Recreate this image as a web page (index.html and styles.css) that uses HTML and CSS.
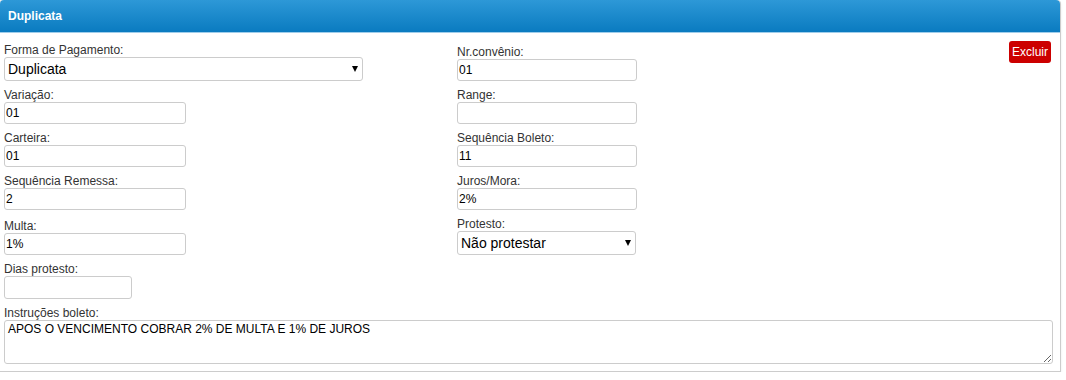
FILE: index.html
```html
<!DOCTYPE html>
<html lang="pt-BR">
<head>
    <meta charset="UTF-8">
    <title>Duplicata</title>
    <link rel="stylesheet" href="styles.css">
</head>
<body>
    <div class="panel">
        <div class="panel-heading">Duplicata</div>
        <div class="panel-body">
            <div class="field">
                <label>Forma de Pagamento:</label>
                <div class="select-wrap wide">
                    <select class="form-select">
                        <option>Duplicata</option>
                    </select>
                </div>
            </div>
            <div class="field">
                <label>Nr.convênio:</label>
                <input class="form-input right" type="text" value="01">
            </div>
            <div class="actions">
                <button class="btn-danger" type="button">Excluir</button>
            </div>

            <div class="field">
                <label>Variação:</label>
                <input class="form-input" type="text" value="01">
            </div>
            <div class="field">
                <label>Range:</label>
                <input class="form-input right" type="text" value="">
            </div>
            <div></div>

            <div class="field">
                <label>Carteira:</label>
                <input class="form-input" type="text" value="01">
            </div>
            <div class="field">
                <label>Sequência Boleto:</label>
                <input class="form-input right" type="text" value="11">
            </div>
            <div></div>

            <div class="field">
                <label>Sequência Remessa:</label>
                <input class="form-input" type="text" value="2">
            </div>
            <div class="field">
                <label>Juros/Mora:</label>
                <input class="form-input right" type="text" value="2%">
            </div>
            <div></div>

            <div class="field">
                <label>Multa:</label>
                <input class="form-input" type="text" value="1%">
            </div>
            <div class="field">
                <label>Protesto:</label>
                <div class="select-wrap narrow">
                    <select class="form-select">
                        <option>Não protestar</option>
                    </select>
                </div>
            </div>
            <div></div>

            <div class="field">
                <label>Dias protesto:</label>
                <input class="form-input short" type="text" value="">
            </div>
            <div></div>
            <div></div>

            <div class="field full">
                <label>Instruções boleto:</label>
                <textarea class="form-textarea">APOS O VENCIMENTO COBRAR 2% DE MULTA E 1% DE JUROS</textarea>
            </div>
        </div>
    </div>
</body>
</html>
```

FILE: styles.css
```css
* {
    margin: 0;
    padding: 0;
    box-sizing: border-box;
}

body {
    font-family: 'Liberation Sans', Arial, sans-serif;
    font-size: 12px;
    color: #333;
    background: #fff;
}

/* painel */
.panel {
    width: 1062px;
    margin-left: -1px;
    border: 1px solid #ccc;
    border-top: none;
    border-radius: 4px 4px 0 0;
    box-shadow: 0 2px 3px rgba(0, 0, 0, 0.08);
}

.panel-heading {
    height: 33px;
    padding: 0 8px;
    line-height: 32px;
    font-weight: bold;
    color: #fff;
    background: linear-gradient(to bottom, #2d98d7, #0a7bc0);
    border-bottom: 1px solid #9fcdea;
    border-radius: 4px 4px 0 0;
}

.panel-body {
    display: grid;
    grid-template-columns: 453px 1fr auto;
    align-items: end;
    row-gap: 7px;
    padding: 10px 6px 7px 4px;
}

/* campos */
.field label {
    display: block;
    height: 14px;
    line-height: 14px;
}

.field.full {
    grid-column: 1 / -1;
}

.form-input {
    display: block;
    width: 182px;
    height: 22px;
    padding: 0 1px;
    border: 1px solid #ccc;
    border-radius: 3px;
    font-family: inherit;
    font-size: 12px;
    color: #000;
    background: #fff;
}

.form-input.right {
    width: 180px;
}

.form-input.short {
    width: 128px;
    height: 23px;
}

.select-wrap {
    position: relative;
    width: 359px;
}

.select-wrap.narrow {
    width: 179px;
}

.select-wrap::after {
    content: '';
    position: absolute;
    right: 5px;
    top: 9px;
    border-left: 3.5px solid transparent;
    border-right: 3.5px solid transparent;
    border-top: 6px solid #000;
    pointer-events: none;
}

.form-select {
    display: block;
    width: 100%;
    height: 24px;
    padding: 0 3px;
    border: 1px solid #ccc;
    border-radius: 3px;
    font-family: inherit;
    font-size: 14px;
    color: #000;
    background: #fff;
    -webkit-appearance: none;
    appearance: none;
}

.form-textarea {
    display: block;
    width: 1049px;
    height: 44px;
    padding: 1px 3px;
    border: 1px solid #ccc;
    border-radius: 3px;
    font-family: inherit;
    font-size: 12px;
    color: #000;
}

/* botão */
.actions {
    align-self: start;
    margin-top: -2px;
    margin-right: 3px;
}

.btn-danger {
    width: 42px;
    height: 22px;
    border: none;
    border-radius: 3px;
    background: #cc0000;
    color: #fff;
    font-family: inherit;
    font-size: 12px;
}
```
